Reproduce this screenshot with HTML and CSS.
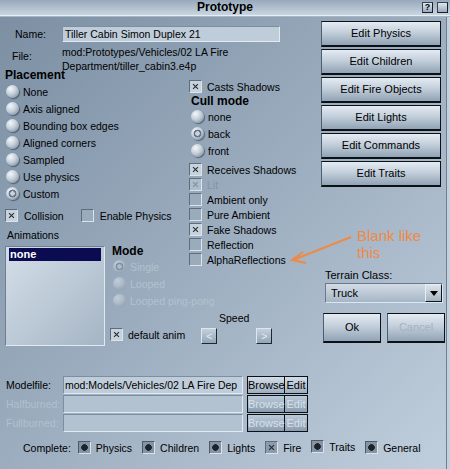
FILE: index.html
```html
<!DOCTYPE html>
<html lang="en">
<head>
    <meta charset="UTF-8">
    <title>Prototype</title>
    <link rel="stylesheet" href="styles.css">
</head>
<body>
    <div class="window">
        <div class="titlebar">
            <span class="title">Prototype</span>
            <span class="tb-btns"><span class="tb-btn">?</span><span class="tb-btn"></span></span>
        </div>

        <div class="main">
            <div class="left">
                <div class="name-row">
                    <span class="lbl">Name:</span>
                    <div class="field name-field">Tiller Cabin Simon Duplex 21</div>
                </div>
                <div class="file-row">
                    <span class="lbl file-lbl">File:</span>
                    <div class="file-path">mod:Prototypes/Vehicles/02 LA Fire<br>Department/tiller_cabin3.e4p</div>
                </div>

                <div class="cols">
                    <div class="col-place">
                        <div class="head">Placement</div>
                        <div class="radios">
                            <div class="opt r"><span class="radio"></span>None</div>
                            <div class="opt r"><span class="radio"></span>Axis aligned</div>
                            <div class="opt r"><span class="radio"></span>Bounding box edges</div>
                            <div class="opt r"><span class="radio"></span>Aligned corners</div>
                            <div class="opt r"><span class="radio"></span>Sampled</div>
                            <div class="opt r"><span class="radio"></span>Use physics</div>
                            <div class="opt r"><span class="radio on"></span>Custom</div>
                        </div>
                        <div class="collide-row">
                            <div class="opt"><span class="chk on"></span>Collision</div>
                            <div class="opt"><span class="chk"></span>Enable Physics</div>
                        </div>
                        <div class="anim-lbl">Animations</div>
                        <div class="anim">
                            <div class="listbox"><div class="sel">none</div></div>
                            <div class="mode">
                                <div class="head">Mode</div>
                                <div class="opt r off"><span class="radio on"></span>Single</div>
                                <div class="opt r off"><span class="radio"></span>Looped</div>
                                <div class="opt r off"><span class="radio"></span>Looped ping-pong</div>
                                <div class="anim-bottom">
                                    <div class="opt def-anim"><span class="chk on"></span>default anim</div>
                                    <div class="speed">
                                        <div class="speed-lbl">Speed</div>
                                        <div class="speed-btns">
                                            <span class="arrow-btn">&lt;</span>
                                            <span class="arrow-btn">&gt;</span>
                                        </div>
                                    </div>
                                </div>
                            </div>
                        </div>
                    </div>

                    <div class="col-opts">
                        <div class="opt c"><span class="chk on"></span>Casts Shadows</div>
                        <div class="head cull">Cull mode</div>
                        <div class="opt r"><span class="radio"></span>none</div>
                        <div class="opt r"><span class="radio on"></span>back</div>
                        <div class="opt r"><span class="radio"></span>front</div>
                        <div class="checks">
                            <div class="opt c"><span class="chk on"></span>Receives Shadows</div>
                            <div class="opt c off"><span class="chk on"></span>Lit</div>
                            <div class="opt c"><span class="chk"></span>Ambient only</div>
                            <div class="opt c"><span class="chk"></span>Pure Ambient</div>
                            <div class="opt c"><span class="chk on"></span>Fake Shadows</div>
                            <div class="opt c"><span class="chk"></span>Reflection</div>
                            <div class="opt c"><span class="chk"></span>AlphaReflections</div>
                        </div>
                    </div>
                </div>
            </div>

            <div class="right">
                <div class="edit-btns">
                    <div class="btn">Edit Physics</div>
                    <div class="btn">Edit Children</div>
                    <div class="btn">Edit Fire Objects</div>
                    <div class="btn">Edit Lights</div>
                    <div class="btn">Edit Commands</div>
                    <div class="btn">Edit Traits</div>
                </div>
                <div class="note">Blank like<br>this</div>
                <div class="terrain-lbl">Terrain Class:</div>
                <div class="select">
                    <span class="select-val">Truck</span>
                    <span class="select-drop"><span class="tri"></span></span>
                </div>
                <div class="ok-row">
                    <div class="btn ok">Ok</div>
                    <div class="btn cancel off">Cancel</div>
                </div>
            </div>
        </div>

        <div class="files">
            <div class="frow">
                <span class="flbl">Modelfile:</span>
                <div class="field ffield">mod:Models/Vehicles/02 LA Fire Dep</div>
                <span class="sbtn browse">Browse</span><span class="sbtn edit">Edit</span>
            </div>
            <div class="frow off">
                <span class="flbl">Halfburned:</span>
                <div class="field ffield"></div>
                <span class="sbtn browse">Browse</span><span class="sbtn edit">Edit</span>
            </div>
            <div class="frow off">
                <span class="flbl">Fullburned:</span>
                <div class="field ffield"></div>
                <span class="sbtn browse">Browse</span><span class="sbtn edit">Edit</span>
            </div>
        </div>

        <div class="complete">
            <span class="complete-lbl">Complete:</span>
            <div class="opt"><span class="dot-box"></span>Physics</div>
            <div class="opt"><span class="dot-box"></span>Children</div>
            <div class="opt"><span class="dot-box"></span>Lights</div>
            <div class="opt"><span class="chk on sq"></span>Fire</div>
            <div class="opt traits"><span class="dot-box"></span>Traits</div>
            <div class="opt"><span class="dot-box"></span>General</div>
        </div>

        <!-- annotation arrow drawn over the dialog -->
        <svg class="note-arrow" width="450" height="469" viewBox="0 0 450 469">
            <line x1="351" y1="237" x2="293" y2="260" stroke="#ee8a45" stroke-width="2"/>
            <polyline points="303,252 292,260 306,263" fill="none" stroke="#ee8a45" stroke-width="2"/>
        </svg>
    </div>
</body>
</html>
```

FILE: styles.css
```css
* {
    box-sizing: border-box;
}
body {
    margin: 0;
    font-family: "Liberation Sans", Arial, sans-serif;
    font-size: 10.5px;
    color: #000;
}
.window {
    position: relative;
    width: 450px;
    height: 469px;
    overflow: hidden;
    background: linear-gradient(to bottom right, #7b8ea2 0%, #9cadbf 50%, #c0cfdd 100%);
    box-shadow: inset -3px 0 0 #c4d0dc, inset -4px 0 0 #6f7f90;
}

/* title bar */
.titlebar {
    position: relative;
    height: 16px;
    background: linear-gradient(#97a9bb, #c9d5e1);
    border-bottom: 1px solid #e6edf4;
    box-shadow: 0 1px 0 #a9b6c3;
    text-align: center;
}
.title {
    font-size: 12px;
    font-weight: bold;
    line-height: 15px;
}
.tb-btns {
    position: absolute;
    right: 2px;
    top: 2px;
    display: flex;
    gap: 4px;
}
.tb-btn {
    width: 11px;
    height: 11px;
    border: 1px solid #1a2028;
    border-top-color: #3a4450;
    border-left-color: #3a4450;
    background: linear-gradient(#dfe7ee, #9aabbc);
    font-size: 9px;
    font-weight: bold;
    line-height: 9px;
    text-align: center;
}

/* main area */
.main {
    display: flex;
}
.left {
    width: 321px;
}
.lbl {
    width: 57px;
    padding-left: 10px;
}
.field {
    background: #bfcdda;
    border: 1px solid #e2eaf1;
    border-top-color: #7d8ea0;
    border-left-color: #7d8ea0;
}
.name-row {
    display: flex;
    align-items: center;
    margin-top: 10px;
    padding-left: 5px;
}
.name-field {
    width: 218px;
    height: 16px;
    line-height: 14px;
    padding-left: 2px;
}
.file-row {
    display: flex;
    margin-top: 3px;
    padding-left: 5px;
    line-height: 14px;
}
.file-lbl {
    padding-left: 7px;
    padding-top: 4px;
}

.cols {
    display: flex;
    margin-top: -5px;
}
.col-place {
    width: 189px;
    padding-left: 6px;
}
.head {
    font-size: 12px;
    font-weight: bold;
    line-height: 14px;
}
.col-place > .head {
    margin-left: -1px;
}
.opt {
    display: flex;
    align-items: center;
    gap: 5px;
    white-space: nowrap;
}
.opt.r {
    height: 17px;
    gap: 4px;
}
.opt.c {
    height: 15px;
}
.opt.off {
    color: #b3c1cf;
}
.col-opts .opt.off {
    color: #8494a5;
}
.radios {
    margin-top: 1px;
}

/* radio buttons */
.radio {
    flex: none;
    width: 13px;
    height: 13px;
    border-radius: 50%;
    background: radial-gradient(circle at 35% 30%, #f4f7fa 0%, #c3ced9 45%, #7d8c9c 90%);
    box-shadow: 1px 1px 1px rgba(40, 52, 66, 0.6);
}
.radio.on {
    background:
        radial-gradient(circle, #c9d3dd 0 2px, #66768a 2.5px 3.6px, transparent 4.2px),
        radial-gradient(circle at 35% 30%, #f4f7fa 0%, #c3ced9 45%, #7d8c9c 90%);
}
.off .radio {
    opacity: 0.45;
    box-shadow: none;
}

/* check boxes */
.chk {
    position: relative;
    flex: none;
    width: 13px;
    height: 13px;
    background: #9aabbc;
    border: 1px solid #dbe4ec;
    border-top-color: #5d6d7e;
    border-left-color: #5d6d7e;
}
.chk.on {
    background: #c7d2dc;
}
.chk.on::before,
.chk.on::after {
    content: "";
    position: absolute;
    left: 2px;
    top: 5px;
    width: 7px;
    height: 1px;
    background: #1e2630;
    transform: rotate(45deg);
}
.chk.on::after {
    transform: rotate(-45deg);
}
.off .chk.on {
    background: #aebdcb;
}
.off .chk.on::before,
.off .chk.on::after {
    background: #7f8fa0;
}

.collide-row {
    display: flex;
    gap: 17px;
    margin-top: 7px;
    margin-left: -1px;
    height: 13px;
}
.collide-row .opt {
    gap: 6px;
}
.anim-lbl {
    margin-top: 7px;
    margin-left: 1px;
    line-height: 13px;
}
.anim {
    display: flex;
    align-items: flex-start;
    gap: 7px;
    margin-top: 4px;
    margin-left: -1px;
}
.listbox {
    flex: none;
    width: 100px;
    height: 100px;
    padding: 1px 3px;
    background: linear-gradient(to bottom right, #d4dee8, #a5b5c5);
    border: 1px solid #e1e9f0;
    border-top-color: #6e7f91;
    border-left-color: #6e7f91;
}
.sel {
    background: #0b0b52;
    color: #fff;
    font-weight: bold;
    font-size: 11px;
    line-height: 13px;
    padding-left: 1px;
}
.mode {
    margin-top: -2px;
}
.mode .opt.r {
    margin-left: 1px;
}
.anim-bottom {
    display: flex;
    align-items: flex-end;
    margin-top: 3px;
    margin-left: -2px;
}
.def-anim {
    margin-bottom: 3px;
    height: 13px;
}
.speed {
    width: 71px;
    margin-left: 16px;
}
.speed-lbl {
    text-align: center;
    line-height: 13px;
    margin-bottom: 3px;
    padding-right: 5px;
}
.speed-btns {
    display: flex;
    justify-content: space-between;
}
.arrow-btn {
    width: 16px;
    height: 16px;
    border: 1px solid #1e262e;
    border-top-color: #dfe7ee;
    border-left-color: #dfe7ee;
    background: linear-gradient(#c4d0dc, #93a5b7);
    color: #e4ecf3;
    text-align: center;
    line-height: 14px;
}

.col-opts {
    padding-top: 11px;
}
.col-opts .opt.c {
    gap: 5px;
}
.col-opts .opt.r {
    margin-left: 2px;
}
.cull {
    margin-left: 2px;
}
.checks {
    margin-top: 3px;
}

/* right column */
.right {
    width: 126px;
    padding-top: 5px;
}
.edit-btns {
    display: flex;
    flex-direction: column;
    gap: 2px;
}
.btn {
    height: 26px;
    width: 120px;
    border: 1px solid #0c1116;
    border-left-color: #4f5e6d;
    border-bottom-width: 2px;
    background: linear-gradient(#e4ebf2 0%, #c3cfdb 45%, #91a3b5 100%);
    text-align: center;
    line-height: 23px;
    font-size: 11px;
}
.note {
    margin-top: 40px;
    padding-left: 36px;
    color: #ee8a45;
    font-size: 15px;
    line-height: 17px;
}
.terrain-lbl {
    margin-top: 8px;
    padding-left: 4px;
    line-height: 13px;
    font-size: 11px;
}
.select {
    display: flex;
    width: 118px;
    height: 20px;
    margin-top: 1px;
    margin-left: 4px;
    background: linear-gradient(#d2dce6, #a6b6c6);
    border: 1px solid #e0e8ef;
    border-top-color: #6a7a8c;
    border-left-color: #6a7a8c;
}
.select-val {
    flex: 1;
    padding-left: 5px;
    line-height: 18px;
    font-size: 11px;
}
.select-drop {
    width: 17px;
    display: flex;
    align-items: center;
    justify-content: center;
    border: 1px solid #10161c;
    border-top-color: #e8eef4;
    border-left-color: #e8eef4;
    background: linear-gradient(#dde5ec, #a3b3c3);
}
.tri {
    border-left: 4px solid transparent;
    border-right: 4px solid transparent;
    border-top: 5px solid #000;
}
.ok-row {
    display: flex;
    gap: 6px;
    margin-top: 10px;
    margin-left: 2px;
}
.ok-row .btn {
    width: 58px;
    height: 30px;
    line-height: 27px;
}
.btn.off {
    color: #a3b3c3;
}

/* model files */
.files {
    margin-top: 30px;
    padding-left: 6px;
    display: flex;
    flex-direction: column;
    gap: 1px;
}
.frow {
    display: flex;
    align-items: center;
    height: 18px;
}
.flbl {
    width: 57px;
}
.ffield {
    width: 180px;
    height: 18px;
    line-height: 16px;
    padding-left: 1px;
    white-space: nowrap;
    overflow: hidden;
}
.frow.off .flbl {
    color: #b2c0ce;
}
.frow.off .ffield {
    background: #b3c2d0;
}
.sbtn {
    height: 18px;
    line-height: 16px;
    border: 1px solid #0c1116;
    background: linear-gradient(#d3dde7, #9eafc0);
    text-align: center;
    font-size: 11px;
}
.frow.off .sbtn {
    color: #d6e0ea;
    background: linear-gradient(#bccad8, #8b9db0);
}
.browse {
    width: 38px;
    margin-left: 4px;
}
.edit {
    width: 23px;
    border-left: none;
}

/* completion flags */
.complete {
    display: flex;
    align-items: center;
    gap: 10px;
    margin-top: 9px;
    padding-left: 23px;
    height: 13px;
}
.complete .opt {
    gap: 5px;
}
.complete-lbl {
    margin-right: -3px;
}
.dot-box {
    flex: none;
    width: 13px;
    height: 13px;
    border: 1px solid #dae3eb;
    border-top-color: #4d5c6b;
    border-left-color: #4d5c6b;
    background: radial-gradient(circle, #1c232a 0 3px, transparent 3.6px), #8494a4;
}
.chk.sq {
    background: #8c9cac;
}
.traits {
    margin-top: -2px;
}

.note-arrow {
    position: absolute;
    left: 0;
    top: 0;
    pointer-events: none;
}
```
